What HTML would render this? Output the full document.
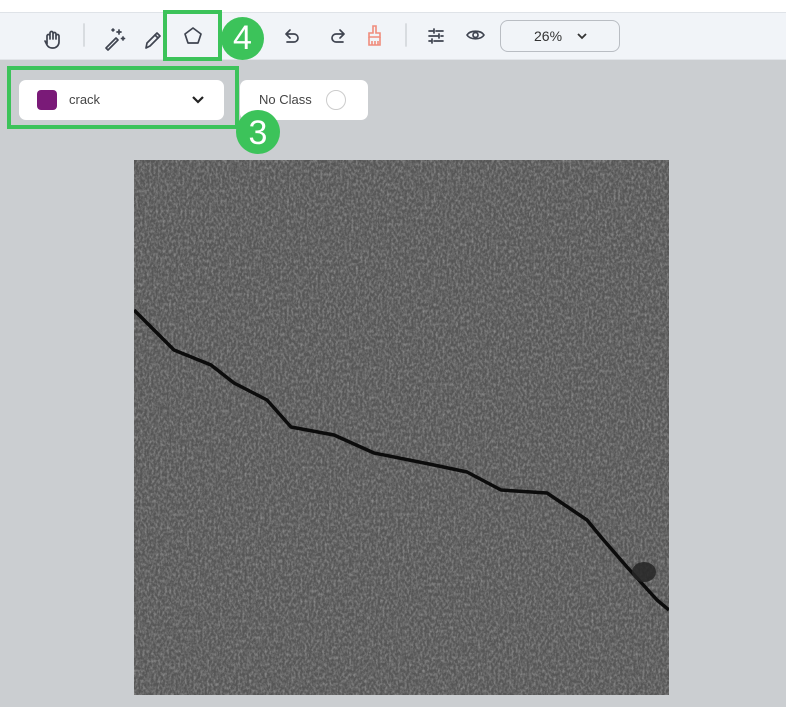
<!DOCTYPE html>
<html><head><meta charset="utf-8"><style>
body{margin:0;width:786px;height:707px;overflow:hidden;background:#cbced1;font-family:"Liberation Sans",sans-serif;position:relative}
.top{position:absolute;left:0;top:0;width:786px;height:12px;background:#fff;border-bottom:1px solid #dfe3e8}
.tb{position:absolute;left:0;top:13px;width:786px;height:46px;background:#f1f4f8;border-bottom:1px solid #e2e5e9}
.ic{position:absolute}
.sel{position:absolute;left:19px;top:80px;width:205px;height:40px;background:#fff;border-radius:7px}
.nc{position:absolute;left:240px;top:80px;width:128px;height:40px;background:#fff;border-radius:7px}
.zoom{position:absolute;left:500px;top:20px;width:118px;height:30px;border:1px solid #b9bdc3;border-radius:8px;font-size:14px;color:#333;line-height:30px}
.gb{position:absolute;border:4px solid #3cc35a;box-sizing:border-box}
.gc{position:absolute;background:#3cc35a;border-radius:50%;color:#fff;font-size:34px;text-align:center;box-sizing:border-box}
</style></head><body>
<div class="top"></div>
<div class="tb"></div>
<svg class="ic" style="left:0;top:13px" width="786" height="46" fill="none" stroke="#3f4450" stroke-width="1.7" stroke-linecap="round" stroke-linejoin="round">
<path d="M47 31v-8a1.5 1.5 0 0 1 3 0v3m0-4v-2a1.5 1.5 0 0 1 3 0v6m0-5a1.5 1.5 0 0 1 3 0v5m0-3a1.5 1.5 0 0 1 3 0v6a6 6 0 0 1-6 6h-1a6 6 0 0 1-5-3l-2-4"/>
<line x1="84" y1="11" x2="84" y2="33" stroke="#d4d7dc"/>
<path d="M106 35l10-10 2 2-10 10z"/><path d="M119 17v4M117 19h4M123 24v3M121.5 25.5h3M113 16v2M112 17h2"/>
<path d="M146 35l1-5 10-10 3 3-10 10z"/><path d="M155 22l3 3"/>
<path d="M193 15l8 6-3 9h-10l-3-9z"/>
<path d="M290 17l-4 4 4 4M286 21h8a4 4 0 0 1 0 8h-7"/>
<path d="M340 17l4 4-4 4M344 21h-8a4 4 0 0 0 0 8h7"/>
<line x1="406" y1="11" x2="406" y2="33" stroke="#d4d7dc"/>
<path d="M429 18h4M436 18h7M429 23h9M441 23h2M429 28h2M434 28h9M434 16v4M439 21v4M432 26v4"/>
<path d="M467 22c3-5 14-5 17 0c-3 5-14 5-17 0z"/><circle cx="475.5" cy="22" r="2.5"/>
</svg>
<svg class="ic" style="left:364px;top:24px" width="22" height="24" fill="none" stroke="#f08c7c" stroke-width="1.6"><path d="M9 2h3v7h4v4H5V9h4z"/><path d="M5 13v8h11v-8M8 17v4M11 17v4M14 17v4"/></svg>
<div class="zoom"><span style="position:absolute;left:33px">26%</span><svg style="position:absolute;left:76px;top:11px" width="10" height="8" fill="none" stroke="#333" stroke-width="1.8"><path d="M1 2l4 4 4-4"/></svg></div>
<div class="sel"><div style="position:absolute;left:18px;top:10px;width:20px;height:20px;border-radius:4px;background:#7a1a78"></div><span style="position:absolute;left:50px;top:12px;font-size:13px;color:#444">crack</span><svg style="position:absolute;left:173px;top:16px" width="12" height="8" fill="none" stroke="#222" stroke-width="2.2"><path d="M1 1l5 5 5-5"/></svg></div>
<div class="nc"><span style="position:absolute;left:19px;top:12px;font-size:13px;color:#444">No Class</span><div style="position:absolute;left:86px;top:10px;width:18px;height:18px;border:1px solid #ccc;border-radius:50%"></div></div>
<svg class="ic" style="left:134px;top:160px" width="535" height="535">
<filter id="n"><feTurbulence type="fractalNoise" baseFrequency="0.45 0.3" numOctaves="3" seed="4"/><feColorMatrix values="0 0 0 0 0.6 0 0 0 0 0.6 0 0 0 0 0.6 0 0 0 1.6 -0.6"/></filter>
<filter id="d"><feTurbulence type="fractalNoise" baseFrequency="0.6" numOctaves="2" seed="9"/><feColorMatrix values="0 0 0 0 0.15 0 0 0 0 0.15 0 0 0 0 0.15 0 0 0 1.6 -0.7"/></filter>
<rect width="535" height="535" fill="#555"/>
<rect width="535" height="535" filter="url(#n)" opacity="0.6"/>
<rect width="535" height="535" filter="url(#d)" opacity="0.6"/>
<path d="M0 150L40 190L77 205L100 223L133 240L157 267L200 275L240 293L300 305L333 312L367 330L413 333L453 360L467 377L493 407L523 440L535 450" fill="none" stroke="#0c0c0c" stroke-width="3.5" stroke-linejoin="round"/>
<ellipse cx="510" cy="412" rx="12" ry="10" fill="#262626" opacity="0.85"/>
</svg>
<div class="gb" style="left:163px;top:10px;width:59px;height:51px"></div>
<div class="gc" style="left:221px;top:17px;width:43px;height:43px;line-height:43px">4</div>
<div class="gb" style="left:7px;top:66px;width:232px;height:63px"></div>
<div class="gc" style="left:236px;top:110px;width:44px;height:44px;line-height:46px">3</div>
</body></html>
